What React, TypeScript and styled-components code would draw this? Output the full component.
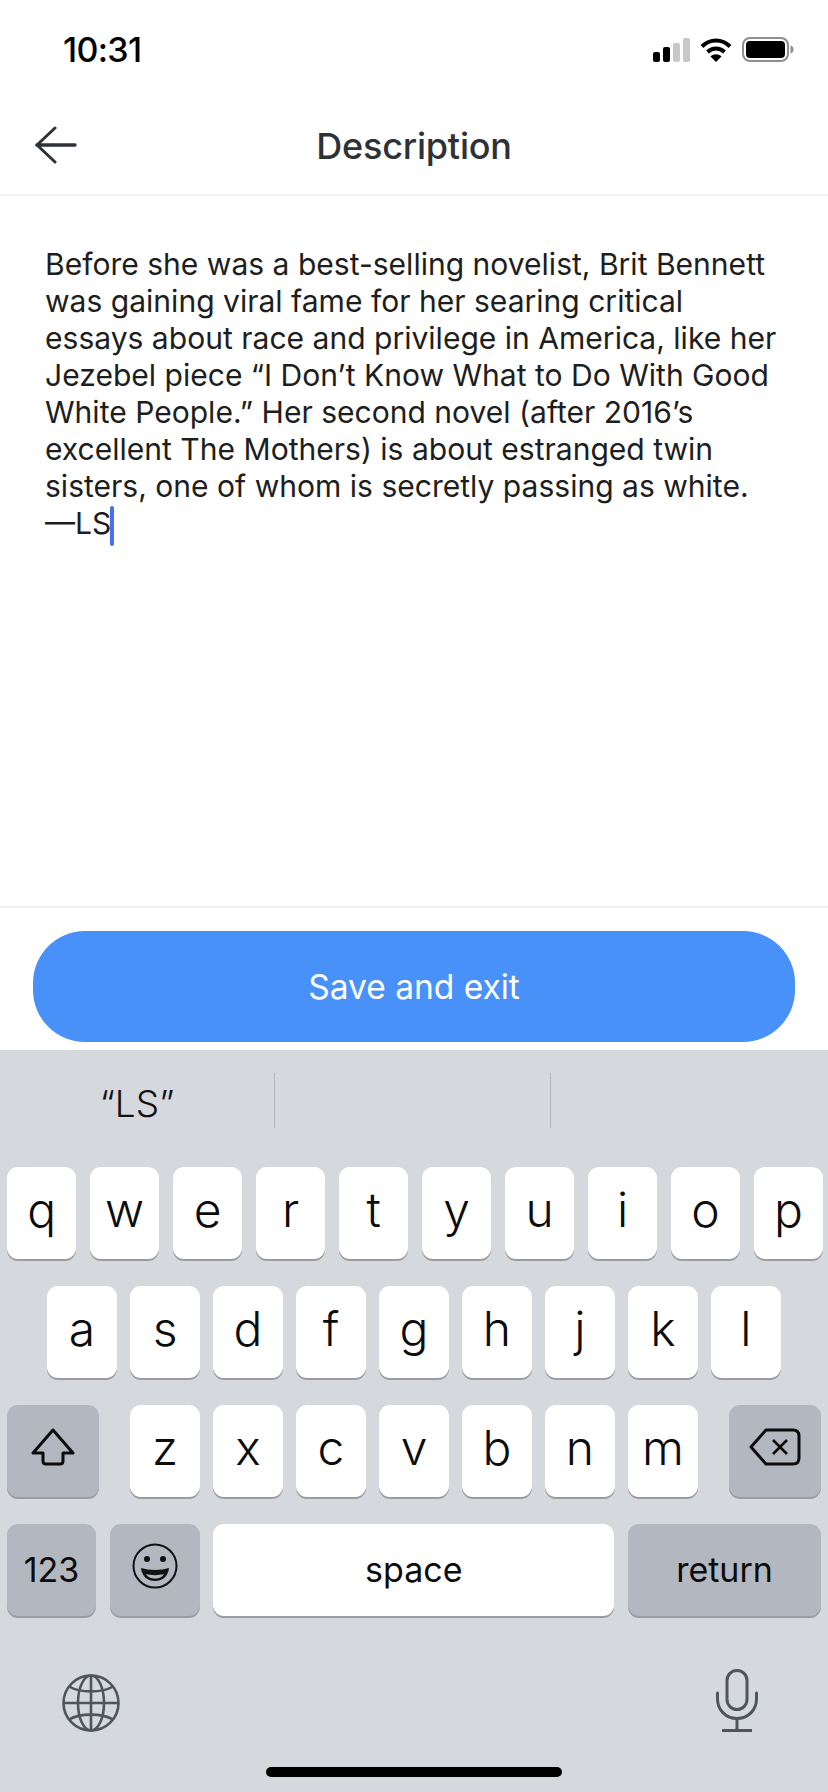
import { FC } from 'react';
import styled, { createGlobalStyle } from 'styled-components';

const GlobalStyle = createGlobalStyle`
  html, body {
    margin: 0;
    padding: 0;
    background: #fff;
  }
  body {
    font-family: Inter, "Liberation Sans", sans-serif;
  }
`;

const Page = styled.div`
  width: 828px;
  height: 1792px;
  display: flex;
  flex-direction: column;
  overflow: hidden;
  background: #fff;
`;

const StatusBar = styled.div`
  height: 88px;
  flex: none;
  display: flex;
  align-items: flex-start;
  justify-content: space-between;
  padding: 30px 34px 0 63px;
  box-sizing: border-box;
`;

const Clock = styled.div`
  font-size: 34px;
  line-height: 40px;
  font-weight: 500;
  letter-spacing: -0.7px;
  color: #000;
`;

const StatusIcons = styled.div`
  display: flex;
  align-items: center;
  gap: 10px;
  margin-top: 7px;
`;

const NavBar = styled.div`
  height: 106px;
  flex: none;
  display: grid;
  grid-template-columns: 120px 1fr 120px;
  align-items: center;
  border-bottom: 2px solid #f3f3f3;
  box-sizing: content-box;
`;

const BackButton = styled.div`
  display: flex;
  padding: 8px 0 0 35px;
  color: #2e3136;
`;

const Title = styled.div`
  text-align: center;
  font-size: 36px;
  font-weight: 500;
  letter-spacing: -0.2px;
  color: #2e3136;
  margin-top: 10px;
`;

const Editor = styled.div`
  flex: 1;
  padding: 50px 30px 0 45px;
`;

const Line = styled.div`
  font-size: 30.05px;
  line-height: 37px;
  color: #1d1e20;
  white-space: nowrap;
`;

const Caret = styled.span`
  display: inline-block;
  width: 4px;
  height: 40px;
  margin: -4px 0 -4px -1px;
  vertical-align: -8px;
  border-radius: 2px;
  background: #4a6ef0;
`;

const Footer = styled.div`
  flex: none;
  height: 144px;
  box-sizing: border-box;
  border-top: 2px solid #efefef;
  padding: 23px 33px 0;
`;

const SaveButton = styled.div`
  height: 111px;
  border-radius: 52px;
  background: #4791f9;
  color: #fff;
  display: flex;
  align-items: center;
  justify-content: center;
  font-size: 33.5px;
  font-weight: 400;
`;

const Keyboard = styled.div`
  flex: none;
  height: 742px;
  display: flex;
  flex-direction: column;
  background: #d5d8dd;
`;

const Suggestions = styled.div`
  height: 117px;
  flex: none;
  display: grid;
  grid-template-columns: 275px 276px 1fr;
  padding-top: 23px;
  box-sizing: border-box;
  align-items: start;
`;

const Suggestion = styled.div<{ $divider?: boolean }>`
  height: 55px;
  display: flex;
  align-items: center;
  justify-content: center;
  font-size: 37px;
  font-weight: 300;
  color: #111;
  border-right: ${({ $divider }) => ($divider ? '1px solid #b4b6ba' : 'none')};
  padding-top: 6px;
  box-sizing: border-box;
`;

const Rows = styled.div`
  display: flex;
  flex-direction: column;
  gap: 27px;
  padding: 0 7px;
`;

const Row = styled.div<{ $center?: boolean }>`
  display: flex;
  gap: 13.6px;
  justify-content: ${({ $center }) => ($center ? 'center' : 'space-between')};
`;

const KeyGroup = styled.div`
  display: flex;
  gap: 13.6px;
`;

const Key = styled.div<{ $width?: number; $grow?: boolean; $dark?: boolean; $small?: boolean }>`
  width: ${({ $width }) => ($width ? `${$width}px` : '69.4px')};
  flex: ${({ $grow }) => ($grow ? '1' : 'none')};
  height: 92px;
  border-radius: 11px;
  background: ${({ $dark }) => ($dark ? '#b3b7c0' : '#fff')};
  box-shadow: 0 2px 0 #9a9ca1;
  display: flex;
  align-items: center;
  justify-content: center;
  color: #0c0c0c;
  font-size: ${({ $small }) => ($small ? '34px' : '48px')};
  font-weight: ${({ $small }) => ($small ? 400 : 300)};
  padding-bottom: ${({ $small }) => ($small ? '2px' : '8px')};
  box-sizing: border-box;
`;

const BottomIcons = styled.div`
  display: flex;
  align-items: flex-end;
  justify-content: space-between;
  padding: 0 70px 0 62px;
  margin-top: 53px;
  height: 63px;
  color: #50555c;
`;

const HomeIndicator = styled.div`
  width: 296px;
  height: 10px;
  border-radius: 5px;
  background: #000;
  margin: 35px auto 0;
`;

const descriptionLines = [
  'Before she was a best-selling novelist, Brit Bennett',
  'was gaining viral fame for her searing critical',
  'essays about race and privilege in America, like her',
  'Jezebel piece “I Don’t Know What to Do With Good',
  'White People.” Her second novel (after 2016’s',
  'excellent The Mothers) is about estranged twin',
  'sisters, one of whom is secretly passing as white.',
];

const topRow = ['q', 'w', 'e', 'r', 't', 'y', 'u', 'i', 'o', 'p'];
const middleRow = ['a', 's', 'd', 'f', 'g', 'h', 'j', 'k', 'l'];
const bottomRow = ['z', 'x', 'c', 'v', 'b', 'n', 'm'];

const SignalIcon: FC = () => (
  <svg width="37" height="24" viewBox="0 0 37 24">
    <rect x="0" y="14" width="7" height="10" rx="2" fill="#000" />
    <rect x="10" y="9" width="7" height="15" rx="2" fill="#000" />
    <rect x="20" y="5" width="7" height="19" rx="2" fill="#c8c8c8" />
    <rect x="30" y="0" width="7" height="24" rx="2" fill="#c8c8c8" />
  </svg>
);

const WifiIcon: FC = () => (
  <svg width="32" height="25" viewBox="0 0 32 25" fill="none">
    <path d="M2 9.5C10 1.5 22 1.5 30 9.5" stroke="#000" strokeWidth="4" />
    <path d="M7.5 15C12.5 10.2 19.5 10.2 24.5 15" stroke="#000" strokeWidth="4" />
    <path d="M10.5 19.5C13.5 16.6 18.5 16.6 21.5 19.5L16 25Z" fill="#000" />
  </svg>
);

const BatteryIcon: FC = () => (
  <svg width="52" height="25" viewBox="0 0 52 25" fill="none">
    <rect x="1" y="1" width="45" height="23" rx="7" stroke="#8e8e8e" strokeWidth="2" />
    <rect x="4" y="4" width="39" height="17" rx="4" fill="#000" />
    <path d="M48.5 8.5C50.5 9 51.5 10.5 51.5 12.5C51.5 14.5 50.5 16 48.5 16.5Z" fill="#8e8e8e" />
  </svg>
);

const BackArrow: FC = () => (
  <svg width="42" height="38" viewBox="0 0 42 38" fill="none">
    <path d="M2 19H40" stroke="currentColor" strokeWidth="3.4" strokeLinecap="round" />
    <path d="M20 2L2 19L20 36" stroke="currentColor" strokeWidth="3" strokeLinecap="round" strokeLinejoin="round" />
  </svg>
);

const ShiftIcon: FC = () => (
  <svg width="44" height="38" viewBox="0 0 44 38" fill="none">
    <path
      d="M22 2L42 25H32V33C32 35 31 36 29 36H15C13 36 12 35 12 33V25H2Z"
      stroke="#0c0c0c"
      strokeWidth="3"
      strokeLinejoin="round"
    />
  </svg>
);

const DeleteIcon: FC = () => (
  <svg width="52" height="38" viewBox="0 0 52 38" fill="none">
    <path
      d="M17 2H44C48 2 50 4 50 8V30C50 34 48 36 44 36H17L2 19Z"
      stroke="#0c0c0c"
      strokeWidth="3"
      strokeLinejoin="round"
    />
    <path d="M24 12L38 26M38 12L24 26" stroke="#0c0c0c" strokeWidth="2.6" />
  </svg>
);

const EmojiIcon: FC = () => (
  <svg width="46" height="46" viewBox="0 0 46 46" fill="none">
    <circle cx="23" cy="23" r="21.5" stroke="#111" strokeWidth="2" />
    <circle cx="15" cy="16" r="3" fill="#111" />
    <circle cx="31" cy="16" r="3" fill="#111" />
    <path d="M9 25C17 27.5 29 27.5 37 25C36 34 30 38 23 38C16 38 10 34 9 25Z" fill="#111" />
    <path d="M14 31C19 32.5 27 32.5 32 31C30 34.5 27 35.5 23 35.5C19 35.5 16 34.5 14 31Z" fill="#b3b7c0" />
  </svg>
);

const GlobeIcon: FC = () => (
  <svg width="58" height="58" viewBox="0 0 58 58" fill="none" stroke="currentColor" strokeWidth="2.6">
    <circle cx="29" cy="29" r="27.5" />
    <ellipse cx="29" cy="29" rx="13" ry="27.5" />
    <path d="M29 1.5V56.5M1.5 29H56.5" />
    <path d="M7 12.5C18 19 40 19 51 12.5M7 45.5C18 39 40 39 51 45.5" />
  </svg>
);

const MicIcon: FC = () => (
  <svg width="42" height="63" viewBox="0 0 42 63" fill="none" stroke="currentColor" strokeWidth="3">
    <rect x="11" y="1.5" width="20" height="39" rx="10" />
    <path d="M1.5 24V30C1.5 41 10 49.5 21 49.5C32 49.5 40.5 41 40.5 30V24" strokeLinecap="round" />
    <path d="M21 49.5V61M6 61.5H36" />
  </svg>
);

const App: FC = () => (
  <Page>
    <GlobalStyle />
    <StatusBar>
      <Clock>10:31</Clock>
      <StatusIcons>
        <SignalIcon />
        <WifiIcon />
        <BatteryIcon />
      </StatusIcons>
    </StatusBar>
    <NavBar>
      <BackButton>
        <BackArrow />
      </BackButton>
      <Title>Description</Title>
      <div />
    </NavBar>
    <Editor>
      {descriptionLines.map((line) => (
        <Line key={line}>{line}</Line>
      ))}
      <Line>
        —LS
        <Caret />
      </Line>
    </Editor>
    <Footer>
      <SaveButton>Save and exit</SaveButton>
    </Footer>
    <Keyboard>
      <Suggestions>
        <Suggestion $divider>“LS”</Suggestion>
        <Suggestion $divider />
        <Suggestion />
      </Suggestions>
      <Rows>
        <Row>
          {topRow.map((letter) => (
            <Key key={letter}>{letter}</Key>
          ))}
        </Row>
        <Row $center>
          {middleRow.map((letter) => (
            <Key key={letter}>{letter}</Key>
          ))}
        </Row>
        <Row>
          <Key $width={92} $dark>
            <ShiftIcon />
          </Key>
          <KeyGroup>
            {bottomRow.map((letter) => (
              <Key key={letter}>{letter}</Key>
            ))}
          </KeyGroup>
          <Key $width={92} $dark>
            <DeleteIcon />
          </Key>
        </Row>
        <Row>
          <Key $width={89} $dark $small>
            123
          </Key>
          <Key $width={90} $dark>
            <EmojiIcon />
          </Key>
          <Key $grow $small>
            space
          </Key>
          <Key $width={193} $dark $small>
            return
          </Key>
        </Row>
      </Rows>
      <BottomIcons>
        <GlobeIcon />
        <MicIcon />
      </BottomIcons>
      <HomeIndicator />
    </Keyboard>
  </Page>
);

export default App;
